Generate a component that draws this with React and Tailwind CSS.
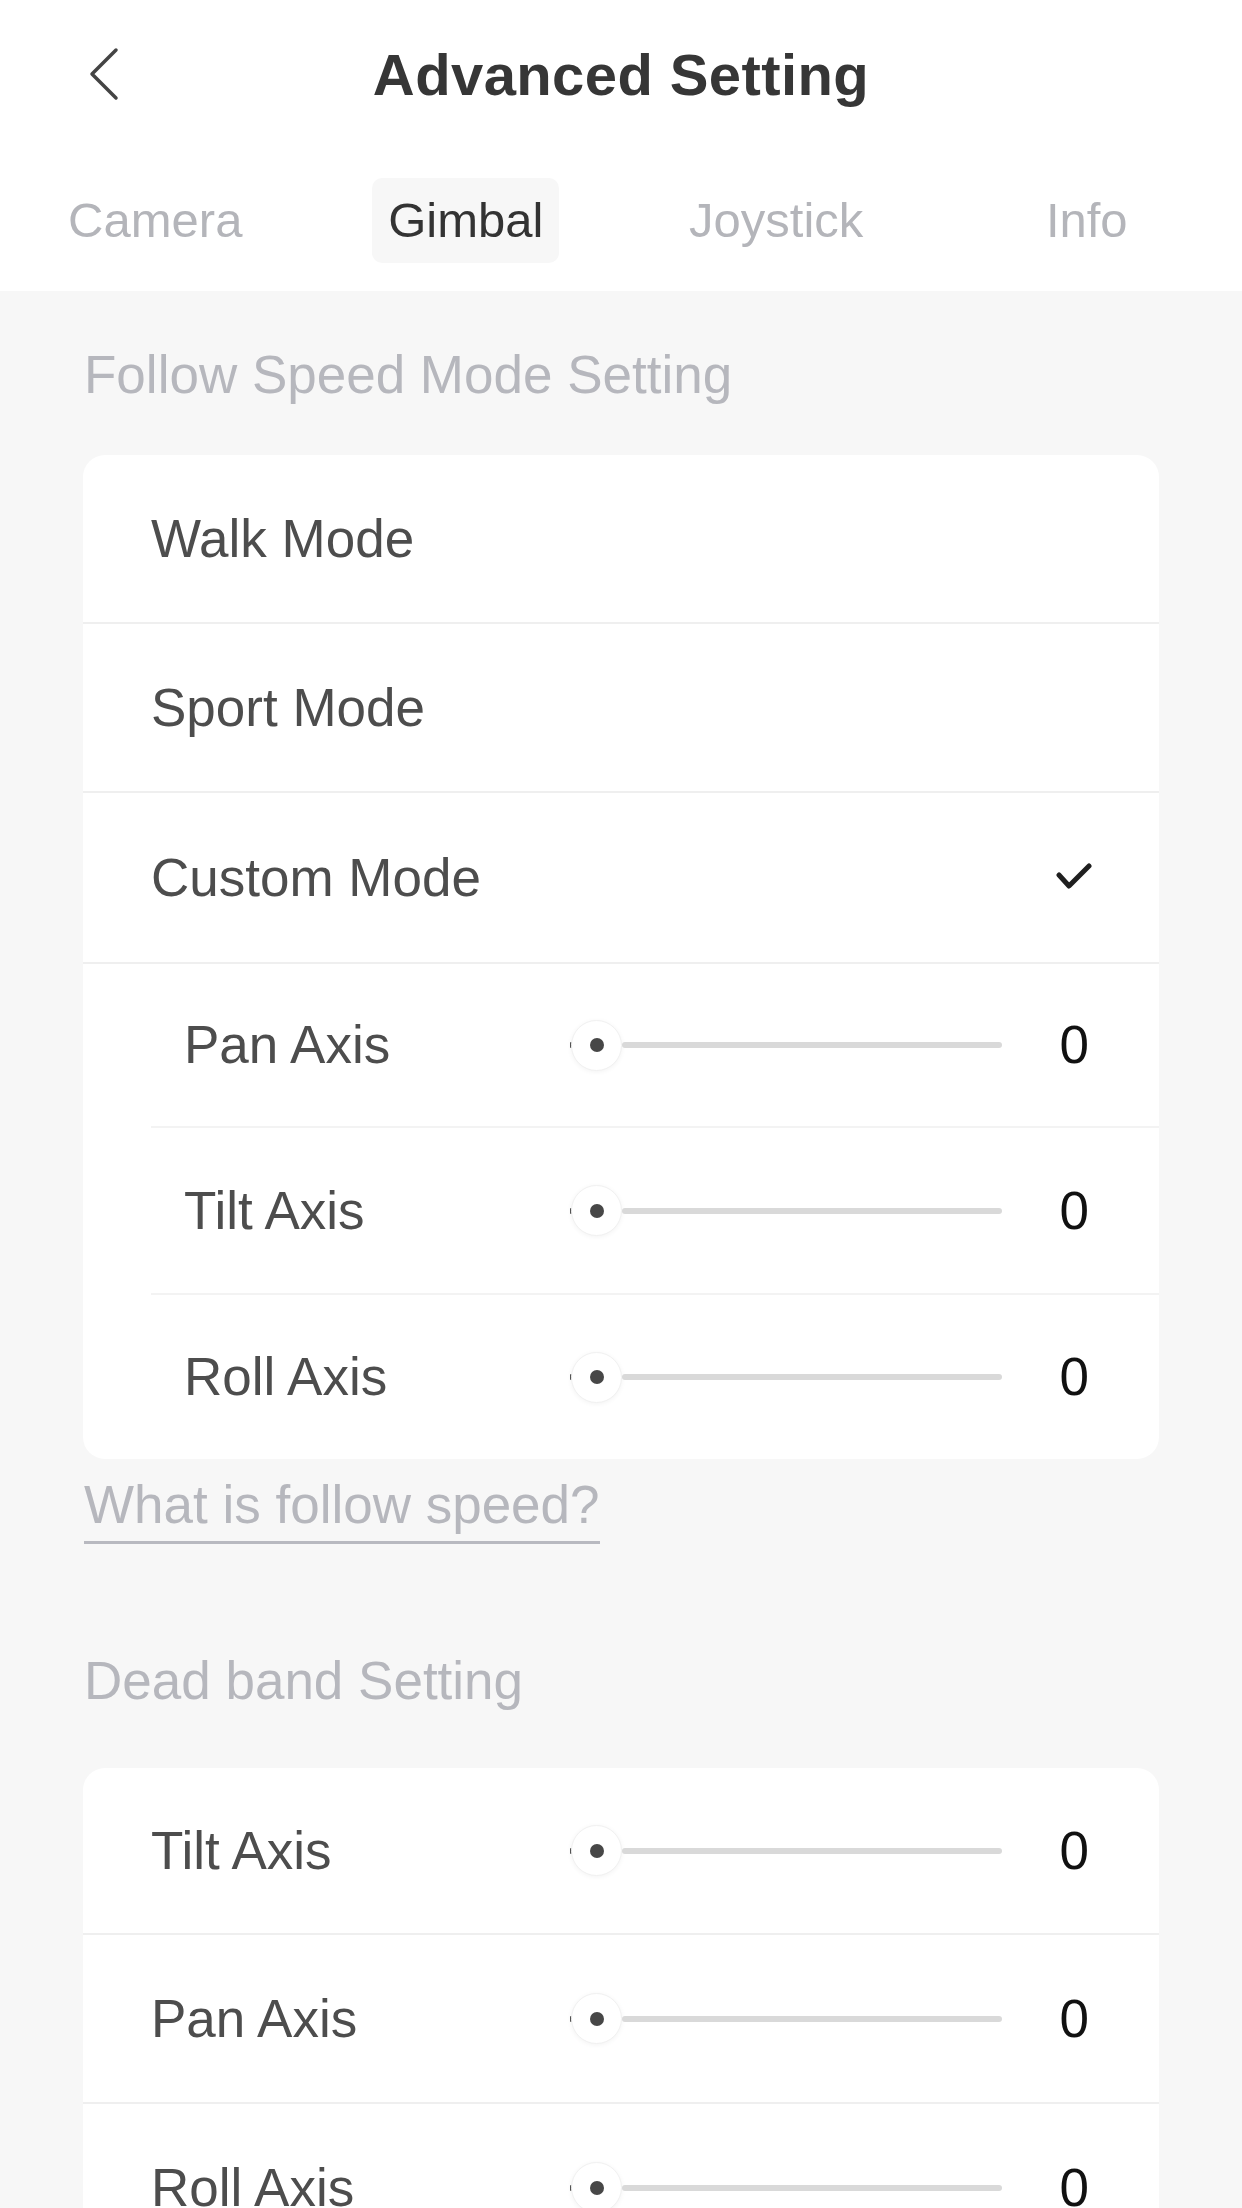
import React from "react";

const tabs = ["Camera", "Gimbal", "Joystick", "Info"];

function Chevron() {
	return (
		<svg width="36" height="56" viewBox="0 0 36 56" fill="none">
			<polyline
				points="30,3 6,27 30,51"
				stroke="#444"
				strokeWidth="3.5"
				strokeLinecap="round"
				strokeLinejoin="round"
			/>
		</svg>
	);
}

function Check() {
	return (
		<svg width="38" height="30" viewBox="0 0 38 30" fill="none">
			<polyline
				points="4,12 14,23 34,3"
				stroke="#1f1f1f"
				strokeWidth="5"
				strokeLinecap="round"
				strokeLinejoin="round"
			/>
		</svg>
	);
}

function Slider() {
	return (
		<div className="flex items-center w-[432px]">
			<div className="w-[2px] h-[6px] bg-[#555] rounded-full" />
			<div className="w-[51px] h-[51px] -ml-[1px] rounded-full bg-white border border-[#f1f1f1] shadow-[0_1px_5px_rgba(0,0,0,0.05)] flex items-center justify-center">
				<div className="w-[14px] h-[14px] rounded-full bg-[#474747]" />
			</div>
			<div className="flex-1 h-[6px] rounded-full bg-[#d9d9d9]" />
		</div>
	);
}

function ModeRow({ label, checked, height }) {
	return (
		<div
			className={`flex items-center pl-[68px] pr-[66px] border-b-2 border-[#efefef] ${height}`}>
			<span className="text-[53px] leading-[64px] text-[#4d4d4d]">{label}</span>
			{checked && (
				<div className="ml-auto">
					<Check />
				</div>
			)}
		</div>
	);
}

function AxisRow({ label, value, sub, last, height }) {
	if (sub) {
		return (
			<div
				className={`ml-[68px] flex items-center pl-[33px] pr-[70px] ${height} ${
					last ? "" : "border-b-2 border-[#f3f3f3]"
				}`}>
				<span className="w-[386px] text-[53px] leading-[64px] text-[#4d4d4d]">
					{label}
				</span>
				<Slider />
				<span className="ml-auto text-[53px] leading-[64px] text-[#111]">
					{value}
				</span>
			</div>
		);
	}
	return (
		<div
			className={`flex items-center pl-[68px] pr-[70px] ${height} ${
				last ? "" : "border-b-2 border-[#efefef]"
			}`}>
			<span className="w-[419px] text-[53px] leading-[64px] text-[#4d4d4d]">
				{label}
			</span>
			<Slider />
			<span className="ml-auto text-[53px] leading-[64px] text-[#111]">
				{value}
			</span>
		</div>
	);
}

export default function App() {
	return (
		<div className="min-h-screen w-full bg-[#f7f7f7] font-['Liberation_Sans',Arial,sans-serif]">
			<div className="bg-white">
				<div className="grid grid-cols-[1fr_auto_1fr] items-center h-[150px]">
					<div className="pl-[86px] flex items-center">
						<Chevron />
					</div>
					<h1 className="text-[58px] font-bold text-[#363636] leading-none tracking-[0.4px]">
						Advanced Setting
					</h1>
					<div />
				</div>
				<div className="grid grid-cols-4 h-[141px] items-center">
					{tabs.map((tab) => (
						<div key={tab} className="flex justify-center">
							{tab === "Gimbal" ? (
								<div className="w-[187px] h-[85px] rounded-[10px] bg-[#f7f7f7] flex items-center justify-center text-[49px] text-[#333]">
									{tab}
								</div>
							) : (
								<div className="h-[85px] flex items-center text-[49px] text-[#b4b5ba]">
									{tab}
								</div>
							)}
						</div>
					))}
				</div>
			</div>

			<div className="px-[84px] pt-[52px] text-[53px] leading-[64px] text-[#b6b7bd]">
				Follow Speed Mode Setting
			</div>

			<div className="mx-[83px] mt-[48px] bg-white rounded-[22px] overflow-hidden">
				<ModeRow label="Walk Mode" height="h-[169px]" />
				<ModeRow label="Sport Mode" height="h-[169px]" />
				<ModeRow label="Custom Mode" checked height="h-[171px]" />
				<AxisRow sub label="Pan Axis" value="0" height="h-[164px]" />
				<AxisRow sub label="Tilt Axis" value="0" height="h-[167px]" />
				<AxisRow sub last label="Roll Axis" value="0" height="h-[164px]" />
			</div>

			<div className="px-[84px] pt-[14px]">
				<span className="inline-block text-[53px] leading-[64px] text-[#b6b7bd] pb-[4px] border-b-[3px] border-[#b8b9c0]">
					What is follow speed?
				</span>
			</div>

			<div className="px-[84px] mt-[105px] text-[53px] leading-[64px] text-[#b6b7bd]">
				Dead band Setting
			</div>

			<div className="mx-[83px] mt-[55px] bg-white rounded-[22px] overflow-hidden">
				<AxisRow label="Tilt Axis" value="0" height="h-[167px]" />
				<AxisRow label="Pan Axis" value="0" height="h-[169px]" />
				<AxisRow last label="Roll Axis" value="0" height="h-[167px]" />
			</div>
		</div>
	);
}
